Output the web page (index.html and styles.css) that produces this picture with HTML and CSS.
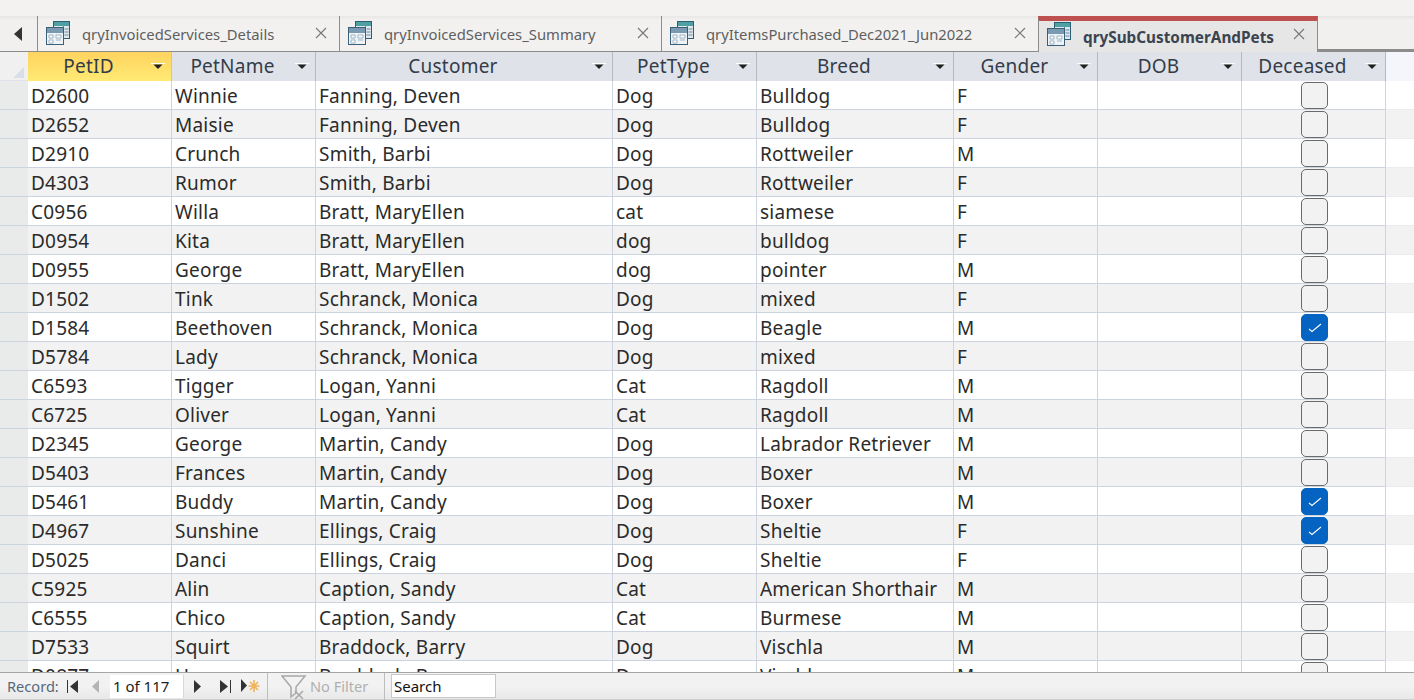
FILE: index.html
```html
<!DOCTYPE html>
<html lang="en">
<head>
<meta charset="utf-8">
<title>qrySubCustomerAndPets</title>
<link rel="stylesheet" href="styles.css">
</head>
<body>
<svg class="defs" width="0" height="0" aria-hidden="true">
  <symbol id="qicon" viewBox="0 0 24 24">
    <rect x="7" y="0" width="17" height="18" fill="#2c5f74"/>
    <rect x="8" y="1" width="15" height="4" fill="#4fa0a2"/>
    <rect x="8" y="5" width="15" height="12" fill="#dfe8ee"/>
    <path d="M17.5 5v12M18.5 8h4M18.5 11h4M18.5 14h4" stroke="#6d8ba0" fill="none"/>
    <rect x="0" y="6" width="18" height="18" fill="#3a5f78"/>
    <rect x="1" y="7" width="16" height="5" fill="#7a9ab2"/>
    <rect x="1" y="12" width="16" height="11" fill="#eef3f7"/>
    <path d="M3 14h4v3H3zM3 19h4v3H3zM10 14h5v3h-5zM10 19h5" stroke="#9db3c4" fill="#fff"/>
  </symbol>
  <symbol id="close" viewBox="0 0 12 12">
    <path d="M1 1l10 10M11 1L1 11" stroke="#777" stroke-width="1.1" fill="none"/>
  </symbol>
  <symbol id="drop" viewBox="0 0 14 7">
    <path d="M0 .5h14" stroke="#fff" fill="none"/>
    <path d="M2.5 1.5h9L7 6z" fill="#222"/>
  </symbol>
  <symbol id="tick" viewBox="0 0 14 10">
    <path d="M1 6l3 2.5L13 1" stroke="#fff" stroke-width="1.1" fill="none"/>
  </symbol>
</svg>

<div class="topbar"></div>

<div class="tabstrip">
  <div class="scroller">
    <svg class="scroll-arrow" width="8" height="14" viewBox="0 0 8 14"><path d="M8 0v14L0 7z" fill="#333"/></svg>
  </div>
  <div class="tab tab-1"><svg class="tab-icon"><use href="#qicon"/></svg><span class="tab-label">qryInvoicedServices_Details</span><svg class="tab-close"><use href="#close"/></svg></div>
  <div class="tab tab-2"><svg class="tab-icon"><use href="#qicon"/></svg><span class="tab-label">qryInvoicedServices_Summary</span><svg class="tab-close"><use href="#close"/></svg></div>
  <div class="tab tab-3"><svg class="tab-icon"><use href="#qicon"/></svg><span class="tab-label">qryItemsPurchased_Dec2021_Jun2022</span><svg class="tab-close"><use href="#close"/></svg></div>
  <div class="tab tab-4 active"><svg class="tab-icon"><use href="#qicon"/></svg><span class="tab-label">qrySubCustomerAndPets</span><svg class="tab-close"><use href="#close"/></svg></div>
  <div class="strip-rest"></div>
</div>

<div class="sheet">
  <div class="row head">
    <div class="sel corner"><span class="tri"></span></div>
    <div class="hc c1 current"><span>PetID</span><svg class="drop"><use href="#drop"/></svg></div>
    <div class="hc c2"><span>PetName</span><svg class="drop"><use href="#drop"/></svg></div>
    <div class="hc c3"><span>Customer</span><svg class="drop"><use href="#drop"/></svg></div>
    <div class="hc c4"><span>PetType</span><svg class="drop"><use href="#drop"/></svg></div>
    <div class="hc c5"><span>Breed</span><svg class="drop"><use href="#drop"/></svg></div>
    <div class="hc c6"><span>Gender</span><svg class="drop"><use href="#drop"/></svg></div>
    <div class="hc c7"><span>DOB</span><svg class="drop"><use href="#drop"/></svg></div>
    <div class="hc c8"><span>Deceased</span><svg class="drop"><use href="#drop"/></svg></div>
    <div class="fill"></div>
  </div>
  <div class="row"><div class="sel"></div><div class="td c1">D2600</div><div class="td c2">Winnie</div><div class="td c3">Fanning, Deven</div><div class="td c4">Dog</div><div class="td c5">Bulldog</div><div class="td c6">F</div><div class="td c7"></div><div class="td c8"><span class="cb"></span></div><div class="fill"></div></div>
  <div class="row alt"><div class="sel"></div><div class="td c1">D2652</div><div class="td c2">Maisie</div><div class="td c3">Fanning, Deven</div><div class="td c4">Dog</div><div class="td c5">Bulldog</div><div class="td c6">F</div><div class="td c7"></div><div class="td c8"><span class="cb"></span></div><div class="fill"></div></div>
  <div class="row"><div class="sel"></div><div class="td c1">D2910</div><div class="td c2">Crunch</div><div class="td c3">Smith, Barbi</div><div class="td c4">Dog</div><div class="td c5">Rottweiler</div><div class="td c6">M</div><div class="td c7"></div><div class="td c8"><span class="cb"></span></div><div class="fill"></div></div>
  <div class="row alt"><div class="sel"></div><div class="td c1">D4303</div><div class="td c2">Rumor</div><div class="td c3">Smith, Barbi</div><div class="td c4">Dog</div><div class="td c5">Rottweiler</div><div class="td c6">F</div><div class="td c7"></div><div class="td c8"><span class="cb"></span></div><div class="fill"></div></div>
  <div class="row"><div class="sel"></div><div class="td c1">C0956</div><div class="td c2">Willa</div><div class="td c3">Bratt, MaryEllen</div><div class="td c4">cat</div><div class="td c5">siamese</div><div class="td c6">F</div><div class="td c7"></div><div class="td c8"><span class="cb"></span></div><div class="fill"></div></div>
  <div class="row alt"><div class="sel"></div><div class="td c1">D0954</div><div class="td c2">Kita</div><div class="td c3">Bratt, MaryEllen</div><div class="td c4">dog</div><div class="td c5">bulldog</div><div class="td c6">F</div><div class="td c7"></div><div class="td c8"><span class="cb"></span></div><div class="fill"></div></div>
  <div class="row"><div class="sel"></div><div class="td c1">D0955</div><div class="td c2">George</div><div class="td c3">Bratt, MaryEllen</div><div class="td c4">dog</div><div class="td c5">pointer</div><div class="td c6">M</div><div class="td c7"></div><div class="td c8"><span class="cb"></span></div><div class="fill"></div></div>
  <div class="row alt"><div class="sel"></div><div class="td c1">D1502</div><div class="td c2">Tink</div><div class="td c3">Schranck, Monica</div><div class="td c4">Dog</div><div class="td c5">mixed</div><div class="td c6">F</div><div class="td c7"></div><div class="td c8"><span class="cb"></span></div><div class="fill"></div></div>
  <div class="row"><div class="sel"></div><div class="td c1">D1584</div><div class="td c2">Beethoven</div><div class="td c3">Schranck, Monica</div><div class="td c4">Dog</div><div class="td c5">Beagle</div><div class="td c6">M</div><div class="td c7"></div><div class="td c8"><span class="cb on"><svg class="tick"><use href="#tick"/></svg></span></div><div class="fill"></div></div>
  <div class="row alt"><div class="sel"></div><div class="td c1">D5784</div><div class="td c2">Lady</div><div class="td c3">Schranck, Monica</div><div class="td c4">Dog</div><div class="td c5">mixed</div><div class="td c6">F</div><div class="td c7"></div><div class="td c8"><span class="cb"></span></div><div class="fill"></div></div>
  <div class="row"><div class="sel"></div><div class="td c1">C6593</div><div class="td c2">Tigger</div><div class="td c3">Logan, Yanni</div><div class="td c4">Cat</div><div class="td c5">Ragdoll</div><div class="td c6">M</div><div class="td c7"></div><div class="td c8"><span class="cb"></span></div><div class="fill"></div></div>
  <div class="row alt"><div class="sel"></div><div class="td c1">C6725</div><div class="td c2">Oliver</div><div class="td c3">Logan, Yanni</div><div class="td c4">Cat</div><div class="td c5">Ragdoll</div><div class="td c6">M</div><div class="td c7"></div><div class="td c8"><span class="cb"></span></div><div class="fill"></div></div>
  <div class="row"><div class="sel"></div><div class="td c1">D2345</div><div class="td c2">George</div><div class="td c3">Martin, Candy</div><div class="td c4">Dog</div><div class="td c5">Labrador Retriever</div><div class="td c6">M</div><div class="td c7"></div><div class="td c8"><span class="cb"></span></div><div class="fill"></div></div>
  <div class="row alt"><div class="sel"></div><div class="td c1">D5403</div><div class="td c2">Frances</div><div class="td c3">Martin, Candy</div><div class="td c4">Dog</div><div class="td c5">Boxer</div><div class="td c6">M</div><div class="td c7"></div><div class="td c8"><span class="cb"></span></div><div class="fill"></div></div>
  <div class="row"><div class="sel"></div><div class="td c1">D5461</div><div class="td c2">Buddy</div><div class="td c3">Martin, Candy</div><div class="td c4">Dog</div><div class="td c5">Boxer</div><div class="td c6">M</div><div class="td c7"></div><div class="td c8"><span class="cb on"><svg class="tick"><use href="#tick"/></svg></span></div><div class="fill"></div></div>
  <div class="row alt"><div class="sel"></div><div class="td c1">D4967</div><div class="td c2">Sunshine</div><div class="td c3">Ellings, Craig</div><div class="td c4">Dog</div><div class="td c5">Sheltie</div><div class="td c6">F</div><div class="td c7"></div><div class="td c8"><span class="cb on"><svg class="tick"><use href="#tick"/></svg></span></div><div class="fill"></div></div>
  <div class="row"><div class="sel"></div><div class="td c1">D5025</div><div class="td c2">Danci</div><div class="td c3">Ellings, Craig</div><div class="td c4">Dog</div><div class="td c5">Sheltie</div><div class="td c6">F</div><div class="td c7"></div><div class="td c8"><span class="cb"></span></div><div class="fill"></div></div>
  <div class="row alt"><div class="sel"></div><div class="td c1">C5925</div><div class="td c2">Alin</div><div class="td c3">Caption, Sandy</div><div class="td c4">Cat</div><div class="td c5">American Shorthair</div><div class="td c6">M</div><div class="td c7"></div><div class="td c8"><span class="cb"></span></div><div class="fill"></div></div>
  <div class="row"><div class="sel"></div><div class="td c1">C6555</div><div class="td c2">Chico</div><div class="td c3">Caption, Sandy</div><div class="td c4">Cat</div><div class="td c5">Burmese</div><div class="td c6">M</div><div class="td c7"></div><div class="td c8"><span class="cb"></span></div><div class="fill"></div></div>
  <div class="row alt"><div class="sel"></div><div class="td c1">D7533</div><div class="td c2">Squirt</div><div class="td c3">Braddock, Barry</div><div class="td c4">Dog</div><div class="td c5">Vischla</div><div class="td c6">M</div><div class="td c7"></div><div class="td c8"><span class="cb"></span></div><div class="fill"></div></div>
  <div class="row"><div class="sel"></div><div class="td c1">D0877</div><div class="td c2">Hugo</div><div class="td c3">Braddock, Barry</div><div class="td c4">Dog</div><div class="td c5">Vischla</div><div class="td c6">M</div><div class="td c7"></div><div class="td c8"><span class="cb"></span></div><div class="fill"></div></div>
</div>

<div class="status">
  <span class="rec-label">Record:</span>
  <svg class="pg pg-first" width="11" height="13" viewBox="0 0 11 13"><path d="M0.5 0v13" stroke="#333" fill="none"/><path d="M11 0v13L3 6.5z" fill="#333"/></svg>
  <svg class="pg pg-prev" width="7" height="13" viewBox="0 0 7 13"><path d="M7 0v13L0 6.5z" fill="#b4b4b4"/></svg>
  <div class="rec-box">1 of 117</div>
  <svg class="pg pg-next" width="7" height="13" viewBox="0 0 7 13"><path d="M0 0v13l7-6.5z" fill="#333"/></svg>
  <svg class="pg pg-last" width="11" height="13" viewBox="0 0 11 13"><path d="M0 0v13l8-6.5z" fill="#333"/><path d="M10.5 0v13" stroke="#333" fill="none"/></svg>
  <svg class="pg pg-new" width="20" height="14" viewBox="0 0 20 14"><path d="M0 0v13l6-6.5z" fill="#333"/><path d="M13 1v12M7.5 7h11M9 3l8 8M17 3l-8 8" stroke="#f0b45a" stroke-width="1.6" fill="none"/></svg>
  <span class="div div-a"></span>
  <svg class="funnel" width="26" height="24" viewBox="0 0 26 24"><path d="M1 1h23l-9 11v6l-5 4V12z" fill="none" stroke="#a8a8a8" stroke-width="1.5"/><path d="M14 16l8 8M22 16l-8 8" stroke="#a8a8a8" stroke-width="1.5" fill="none"/></svg>
  <span class="nofilter">No Filter</span>
  <span class="div div-b"></span>
  <div class="search">Search</div>
</div>
</body>
</html>
```

FILE: styles.css
```css
* { box-sizing: border-box; }
html, body { margin: 0; padding: 0; }
body {
  width: 1414px;
  height: 700px;
  overflow: hidden;
  display: flex;
  flex-direction: column;
  background: #fff;
  font-family: "Noto Sans", "Open Sans", sans-serif;
  color: #2b2b2b;
}
.defs { position: absolute; }

.topbar { height: 16px; flex: none; background: #f3f2f1; }

.tabstrip {
  height: 36px;
  flex: none;
  display: flex;
  background: linear-gradient(#e6e5e4 0, #f1f0ef 4px);
}
.scroller {
  width: 38px;
  flex: none;
  display: flex;
  align-items: center;
  padding-left: 14px;
  padding-top: 1px;
  border-right: 1px solid #8c8c8c;
  border-bottom: 1px solid #8c8c8c;
}
.tab {
  flex: none;
  display: flex;
  align-items: center;
  padding-left: 8px;
  border-right: 1px solid #8c8c8c;
  border-bottom: 1px solid #8c8c8c;
  background: linear-gradient(#e8e7e6 0, #f2f1f0 4px);
  position: relative;
}
.tab-1 { width: 302px; }
.tab-2 { width: 322px; }
.tab-3 { width: 377px; }
.tab-4 { width: 280px; }
.tab-icon { width: 24px; height: 24px; flex: none; margin-top: -1px; }
.tab-label {
  margin-left: 12px;
  font-size: 14.8px;
  color: #5f5f5f;
  white-space: nowrap;
  flex: 1;
}
.tab-close { width: 12px; height: 12px; flex: none; margin-right: 12px; margin-top: -1px; }
.tab.active {
  background: #e6e6e6;
  border-top: 5px solid #bf5050;
  border-bottom: 0;
  border-left: 1px solid #8c8c8c;
  margin-left: -1px;
}
.tab.active .tab-label { font-weight: 700; color: #3a4450; font-size: 15.3px; }
.tab.active .tab-icon { margin-top: -5px; }
.tab.active .tab-close { margin-top: -5px; }
.strip-rest { flex: 1; border-bottom: 3px solid #8c8c8c; }

.sheet { flex: 1; min-height: 0; overflow: hidden; }
.row {
  height: 29px;
  display: flex;
  background: #fff;
}
.row.alt { background: #f2f2f2; }
.row.head { height: 29px; }
.sel {
  width: 28px;
  flex: none;
  background: #e9eaea;
  border-bottom: 1px solid #ccd4e0;
}
.corner {
  background: #f0f0f0;
  position: relative;
  border-bottom-color: #dfe2e8;
}
.tri {
  position: absolute;
  left: 13px;
  top: 15px;
  width: 0;
  height: 0;
  border-style: solid;
  border-width: 0 0 11px 11px;
  border-color: transparent transparent #d8dfe8 transparent;
}
.c1 { width: 144px; }
.c2 { width: 144px; }
.c3 { width: 297px; }
.c4 { width: 144px; }
.c5 { width: 197px; }
.c6 { width: 144px; }
.c7 { width: 144px; }
.c8 { width: 144px; }
.hc, .td { flex: none; }
.hc {
  background: #dfe2e8;
  border-right: 1px solid #b5bac2;
  display: flex;
  align-items: center;
  justify-content: center;
  position: relative;
  font-size: 19px;
  letter-spacing: .22px;
  color: #333c48;
  padding-right: 22px;
  padding-bottom: 2px;
}
.hc.current {
  background: linear-gradient(#ffd35f, #ffea75);
  border-right-color: #d6c98c;
}
.drop {
  position: absolute;
  right: 6px;
  top: 11px;
  width: 14px;
  height: 7px;
}
.td {
  border-right: 1px solid #ccd4e0;
  border-bottom: 1px solid #ccd4e0;
  padding-left: 3px;
  font-size: 19px;
  letter-spacing: .22px;
  line-height: 30px;
  white-space: nowrap;
  overflow: hidden;
}
.c8.td {
  display: flex;
  justify-content: center;
  align-items: center;
  padding: 0 0 0 2px;
}
.cb {
  width: 27px;
  height: 27px;
  border: 1px solid #6a6a6a;
  border-radius: 5px;
  background: #f2f2f2;
  display: flex;
  align-items: center;
  justify-content: center;
}
.cb.on { background: #0563c1; border-color: #0563c1; }
.tick { width: 14px; height: 10px; margin-top: 2px; }
.fill { flex: 1; border-bottom: 1px solid #ececec; }
.head .fill { background: #f5f6fc; border-bottom: 0; }

.status {
  height: 28px;
  flex: none;
  display: flex;
  align-items: center;
  background: linear-gradient(#f2f2f2 0, #f2f2f2 50%, #e8e8e8 100%);
  border-top: 1px solid #a6a6a6;
  border-bottom: 1px solid #d0d0d0;
  padding-left: 7px;
}
.rec-label { font-size: 14.6px; color: #54677c; width: 60px; flex: none; }
.pg { flex: none; }
.pg-first { margin-left: 0; }
.pg-prev { margin-left: 14px; }
.rec-box {
  width: 74px;
  height: 23px;
  margin-left: 11px;
  background: #fff;
  border-right: 1px solid #d8d8d8;
  padding-left: 3px;
  font-size: 15px;
  line-height: 22px;
  color: #222;
}
.pg-next { margin-left: 10px; }
.pg-last { margin-left: 19px; }
.pg-new { margin-left: 10px; }
.div { width: 1px; height: 27px; background: #bdbdbd; flex: none; }
.div-a { margin-left: 6px; }
.funnel { margin-left: 13px; margin-top: 2px; flex: none; }
.nofilter { margin-left: 3px; font-size: 14.6px; color: #b0b0b0; width: 71px; flex: none; white-space: nowrap; }
.div-b { margin-left: 3px; }
.search {
  width: 105px;
  height: 24px;
  margin-left: 6px;
  background: #fff;
  border: 1px solid #c8c8c8;
  padding-left: 2px;
  font-size: 15px;
  line-height: 22px;
  color: #111;
}
```
